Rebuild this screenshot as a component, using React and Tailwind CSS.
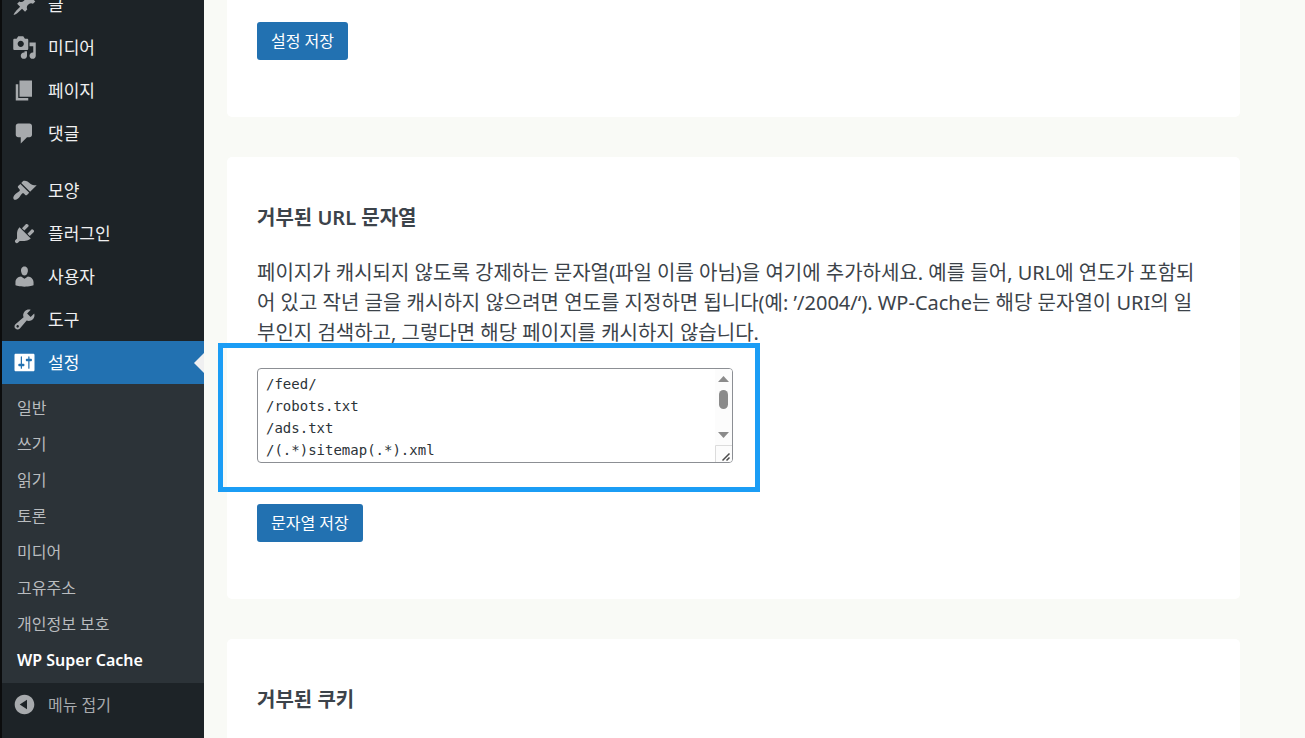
const MENU = [
  { label: '글', icon: 'M10.44 3.02l1.82-1.82 6.36 6.35-1.83 1.82c-1.05-.68-2.48-.57-3.41.36l-.75.75c-.92.93-1.04 2.35-.35 3.41l-1.83 1.82-2.41-2.41-2.8 2.79c-.42.42-3.38 2.71-3.8 2.29s1.86-3.39 2.28-3.81l2.79-2.79L4.1 9.36l1.83-1.82c1.05.69 2.48.57 3.4-.36l.75-.75c.93-.92 1.05-2.35.36-3.41z' },
  { label: '미디어', icon: 'M13 11V4c0-.55-.45-1-1-1h-1.67L9 1H5L3.67 3H2c-.55 0-1 .45-1 1v7c0 .55.45 1 1 1h10c.55 0 1-.45 1-1zM7 4.5c1.38 0 2.5 1.12 2.5 2.5S8.38 9.5 7 9.5 4.5 8.38 4.5 7 5.62 4.5 7 4.5zM14 6h5v10.5c0 1.38-1.12 2.5-2.5 2.5S14 17.88 14 16.5s1.12-2.5 2.5-2.5c.17 0 .34.02.5.05V9h-3V6zm-4 8.05V13h2v3.5c0 1.38-1.12 2.5-2.5 2.5S7 17.88 7 16.5 8.12 14 9.5 14c.17 0 .34.02.5.05z' },
  { label: '페이지', icon: 'M6 15V2h10v13H6zm-1 1h8v2H3V5h2v11z' },
  { label: '댓글', icon: 'M5 2h9c1.1 0 2 .9 2 2v7c0 1.1-.9 2-2 2h-2l-5 5v-5H5c-1.1 0-2-.9-2-2V4c0-1.1.9-2 2-2z' },
  { separator: true },
  { label: '모양', icon: 'M14.48 11.06L7.41 3.99l1.5-1.5c.5-.56 2.3-.47 3.51.32 1.21.8 1.43 1.28 2.91 2.1 1.18.64 2.45 1.26 4.45.85zm-.71.71L6.7 4.7 4.93 6.47c-.39.39-.39 1.02 0 1.41l1.06 1.06c.39.39.39 1.03 0 1.42-.6.6-1.43 1.11-2.21 1.69-.35.26-.7.53-1.01.84C1.43 14.23.4 16.08 1.4 17.07c.99 1 2.84-.03 4.18-1.36.31-.31.58-.66.85-1.02.57-.78 1.08-1.61 1.69-2.21.39-.39 1.02-.39 1.41 0l1.06 1.06c.39.39 1.02.39 1.41 0z' },
  { label: '플러그인', icon: 'M13.11 4.36L9.87 7.6 8 5.73l3.24-3.24c.35-.34 1.05-.2 1.56.32.52.51.66 1.21.31 1.55zm-8 1.77l.91-1.12 9.01 9.01-1.19.84c-.71.71-2.63 1.16-3.82 1.16H6.14L4.9 17.26c-.59.59-1.54.59-2.12 0-.59-.58-.59-1.53 0-2.12l1.24-1.24v-3.88c0-1.13.4-3.19 1.09-3.89zm7.26 3.97l3.24-3.24c.34-.35 1.04-.21 1.55.31.52.51.66 1.21.31 1.55l-3.24 3.25z' },
  { label: '사용자', icon: 'M10 9.25c-2.27 0-2.73-3.44-2.73-3.44C7 4.02 7.82 2 9.97 2c2.16 0 2.98 2.02 2.71 3.81 0 0-.41 3.44-2.68 3.44zm0 2.57L12.72 10c2.39 0 4.52 2.33 4.52 4.53v2.49s-3.65 1.13-7.24 1.13c-3.65 0-7.24-1.13-7.24-1.13v-2.49c0-2.25 1.94-4.48 4.47-4.48z' },
  { label: '도구', icon: 'M16.68 9.77c-1.34 1.34-3.3 1.67-4.95.99l-5.41 6.52c-.99.99-2.59.99-3.58 0s-.99-2.59 0-3.57l6.52-5.42c-.68-1.65-.35-3.61.99-4.95 1.28-1.28 3.12-1.62 4.72-1.06l-2.89 2.89 2.82 2.82 2.86-2.87c.53 1.58.18 3.39-1.08 4.65zM3.81 16.21c.4.39 1.04.39 1.43 0 .4-.4.4-1.04 0-1.43-.39-.4-1.03-.4-1.43 0-.39.39-.39 1.03 0 1.43z' },
  { label: '설정', current: true, icon: 'M18 16V4c0-.55-.45-1-1-1H3c-.55 0-1 .45-1 1v12c0 .55.45 1 1 1h14c.55 0 1-.45 1-1zM8 11h1c.55 0 1 .45 1 1s-.45 1-1 1H8v1.5c0 .28-.22.5-.5.5s-.5-.22-.5-.5V13H6c-.55 0-1-.45-1-1s.45-1 1-1h1V5.5c0-.28.22-.5.5-.5s.5.22.5.5V11zm5-2h-1c-.55 0-1-.45-1-1s.45-1 1-1h1V5.5c0-.28.22-.5.5-.5s.5.22.5.5V7h1c.55 0 1 .45 1 1s-.45 1-1 1h-1v5.5c0 .28-.22.5-.5.5s-.5-.22-.5-.5V9z' },
];

const COLLAPSE_ICON = 'M10 2.16c4.33 0 7.84 3.51 7.84 7.84s-3.51 7.84-7.84 7.84S2.16 14.33 2.16 10 5.71 2.16 10 2.16zm2 11.72V6.12L6.18 9.97z';

const SUBMENU = ['일반', '쓰기', '읽기', '토론', '미디어', '고유주소', '개인정보 보호', 'WP Super Cache'];

const REJECTED_STRINGS = '/feed/\n/robots.txt\n/ads.txt\n/(.*)sitemap(.*).xml';

function MenuIcon({ path, className }) {
  return (
    <svg viewBox="0 0 20 20" aria-hidden="true" className={`h-[25px] w-[25px] shrink-0 fill-current ${className}`}>
      <path fillRule="evenodd" d={path} />
    </svg>
  );
}

function MenuItem({ item }) {
  if (item.separator) return <li className="h-3.5" />;

  return (
    <li>
      <a
        href="#"
        className={`relative flex h-[43px] items-center gap-[11px] pl-2.5 text-[17px] ${item.current ? 'bg-[#2271b1] text-white' : 'text-[#f0f0f1]'}`}
      >
        <MenuIcon path={item.icon} className={item.current ? 'text-white' : 'text-[#a7aaad]'} />
        {item.label}
        {item.current && (
          <span className="absolute top-1/2 right-0 -translate-y-1/2 border-y-10 border-r-10 border-y-transparent border-r-[#f0f0f1]" />
        )}
      </a>
    </li>
  );
}

function Sidebar() {
  return (
    <nav className="w-[204px] shrink-0 border-l-2 border-[#0b0c0d] bg-[#1d2327]">
      <ul className="-mt-[17px]">
        {MENU.map((item, i) => <MenuItem key={i} item={item} />)}
      </ul>
      <ul className="bg-[#2c3338] pt-1.5 pb-[5px]">
        {SUBMENU.map((label, i) => (
          <li key={label}>
            <a
              href="#"
              className={`flex h-9 items-center pl-[15px] text-base ${i === SUBMENU.length - 1 ? 'font-semibold text-white' : 'text-[#b9bcbf]'}`}
            >
              {label}
            </a>
          </li>
        ))}
      </ul>
      <button type="button" className="flex h-[43px] w-full items-center gap-[11px] pl-2.5 text-base text-[#a7aaad]">
        <MenuIcon path={COLLAPSE_ICON} className="text-[#a7aaad]" />
        메뉴 접기
      </button>
    </nav>
  );
}

function SaveButton({ children }) {
  return (
    <button type="button" className="block h-[38px] rounded-[3px] bg-[#2271b1] px-3.5 text-base text-white">
      {children}
    </button>
  );
}

// Textarea with its own scrollbar and resize grip
function StringsField() {
  return (
    <div className="relative w-[476px] max-w-full">
      <textarea
        aria-labelledby="rejected-strings"
        defaultValue={REJECTED_STRINGS}
        rows={4}
        className="block h-[95px] w-full resize-none overflow-hidden rounded-[4px] border border-[#8c8f94] bg-white px-2 pt-1 font-['DejaVu_Sans_Mono',monospace] text-sm leading-[22px] text-[#2c3338] outline-none"
      />
      <div className="absolute inset-y-px right-px flex w-[17px] flex-col items-center rounded-r-[3px] bg-[#fcfcfc]">
        <svg viewBox="0 0 17 76" className="h-[76px] w-[17px] fill-[#8b8b8b]" aria-hidden="true">
          <path d="M3 13L8.5 7L14 13z" />
          <rect x="4" y="21" width="9" height="19" rx="4.5" />
          <path d="M3 63L8.5 69L14 63z" />
        </svg>
        <svg viewBox="0 0 17 17" className="h-[17px] w-[17px]" aria-hidden="true">
          <path d="M0.5 17V0.5H17" fill="none" stroke="#dcdcdc" />
          <path d="M7.5 15.5L14.5 8.5M11.5 15.5L14.5 12.5" fill="none" stroke="#4a4a4a" strokeWidth="1.5" />
        </svg>
      </div>
      <div className="pointer-events-none absolute -top-[25px] -right-[27px] -bottom-[29px] -left-[39px] border-5 border-[#1b9df5]" />
    </div>
  );
}

export default function App() {
  return (
    <div className="flex h-screen overflow-hidden bg-[#f9faf6] font-['Noto_Sans','Noto_Sans_CJK_KR',sans-serif] text-[#3c434a]">
      <Sidebar />
      <main className="flex min-w-0 flex-1 flex-col gap-10 pr-[65px] pl-[23px]">
        <section className="rounded-b-[5px] bg-white px-[30px] pt-[22px] pb-[57px]">
          <SaveButton>설정 저장</SaveButton>
        </section>

        <section className="rounded-[5px] bg-white px-[30px] pt-[46px] pb-[57px]">
          <h4 id="rejected-strings" className="text-xl leading-[30px] font-semibold">거부된 URL 문자열</h4>
          <p className="mt-[25px] mb-5 text-xl leading-[30px] break-all">
            페이지가 캐시되지 않도록 강제하는 문자열(파일 이름 아님)을 여기에 추가하세요. 예를 들어, URL에 연도가 포함되어 있고 작년 글을 캐시하지 않으려면 연도를 지정하면 됩니다(예: ’/2004/‘). WP-Cache는 해당 문자열이 URI의 일부인지 검색하고, 그렇다면 해당 페이지를 캐시하지 않습니다.
          </p>
          <StringsField />
          <div className="mt-[41px]">
            <SaveButton>문자열 저장</SaveButton>
          </div>
        </section>

        <section className="min-h-[140px] rounded-[5px] bg-white px-[30px] pt-[46px]">
          <h4 className="text-xl leading-[30px] font-semibold">거부된 쿠키</h4>
        </section>
      </main>
    </div>
  );
}
